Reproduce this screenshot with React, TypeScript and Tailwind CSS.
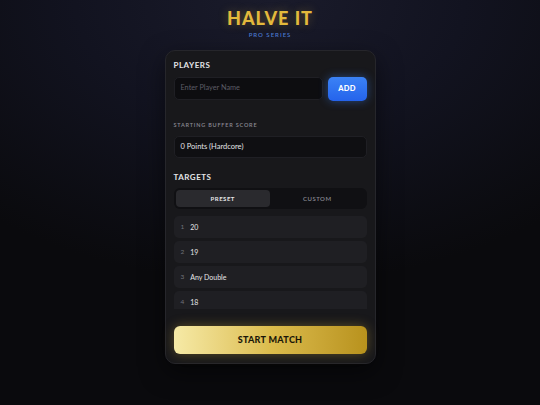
import React from "react";

const targets = ["20", "19", "Any Double", "18"];

export default function App() {
  return (
    <div
      className="w-full h-[405px] overflow-hidden flex flex-col items-center bg-[radial-gradient(ellipse_80%_70%_at_50%_0%,#1a1b2b_0%,#121320_45%,#0a0a0d_100%)]"
      style={{ fontFamily: "Lato, 'Noto Sans', sans-serif" }}
    >
      <div className="mt-[6px] text-[18px] leading-[24px] font-black tracking-[1px] text-[#e3b93c] [text-shadow:0_0_10px_rgba(227,185,60,0.35)]">
        HALVE IT
      </div>
      <div className="mt-[1px] text-[6px] leading-[8px] tracking-[1px] text-[#4a78cf] font-semibold">
        PRO SERIES
      </div>

      <div className="mt-[11px] w-[211px] rounded-[10px] bg-[#18181b] border border-[#26262b] px-[8px] pt-[9px] pb-[9px] shadow-[0_8px_24px_rgba(0,0,0,0.5)]">
        <div className="text-[8px] leading-[10px] font-bold tracking-[0.5px] text-[#e4e4e7]">PLAYERS</div>
        <div className="mt-[7px] flex gap-[5px]">
          <div className="flex-1 h-[23px] rounded-[5px] bg-[#0d0d10] border border-[#1f1f24] flex items-center px-[6px] text-[7.3px] text-[#5c5c66]">
            Enter Player Name
          </div>
          <div className="w-[39px] h-[24px] rounded-[5px] bg-gradient-to-b from-[#3b82f6] to-[#2563eb] shadow-[0_0_10px_rgba(59,130,246,0.45)] flex items-center justify-center text-[7.5px] font-black text-white tracking-[0.3px]">
            ADD
          </div>
        </div>

        <div className="mt-[20px] text-[5.5px] leading-[8px] tracking-[0.8px] font-semibold text-[#8a8a94]">
          STARTING BUFFER SCORE
        </div>
        <div className="mt-[7px] h-[22px] rounded-[5px] bg-[#0f0f12] border border-[#1f1f24] flex items-center px-[6px] text-[7.5px] text-[#e4e4e7]">
          0 Points (Hardcore)
        </div>

        <div className="mt-[14px] text-[8px] leading-[10px] font-bold tracking-[0.5px] text-[#e4e4e7]">TARGETS</div>
        <div className="mt-[6px] h-[21px] rounded-[6px] bg-[#101013] p-[2px] flex">
          <div className="flex-1 rounded-[4px] bg-[#2a2a2e] flex items-center justify-center text-[6px] font-bold tracking-[0.5px] text-[#e4e4e7]">
            PRESET
          </div>
          <div className="flex-1 rounded-[4px] flex items-center justify-center text-[6px] font-semibold tracking-[0.5px] text-[#8a8a94]">
            CUSTOM
          </div>
        </div>

        <div className="mt-[7px] h-[93px] overflow-hidden flex flex-col gap-[3px]">
          {targets.map((t, i) => (
            <div
              key={i}
              className="shrink-0 h-[22px] rounded-[5px] bg-[#1f1f23] flex items-center px-[7px] gap-[6px]"
            >
              <span className="text-[6.5px] text-[#71717a]">{i + 1}</span>
              <span className="text-[7px] text-[#e4e4e7]">{t}</span>
            </div>
          ))}
        </div>

        <div className="mt-[17px] h-[28px] rounded-[6px] bg-gradient-to-r from-[#f6eaa6] via-[#dcbc4c] to-[#b8921c] shadow-[0_0_12px_rgba(220,180,60,0.35)] flex items-center justify-center text-[9px] font-black tracking-[0.3px] text-[#1a1608]">
          START MATCH
        </div>
      </div>
    </div>
  );
}
